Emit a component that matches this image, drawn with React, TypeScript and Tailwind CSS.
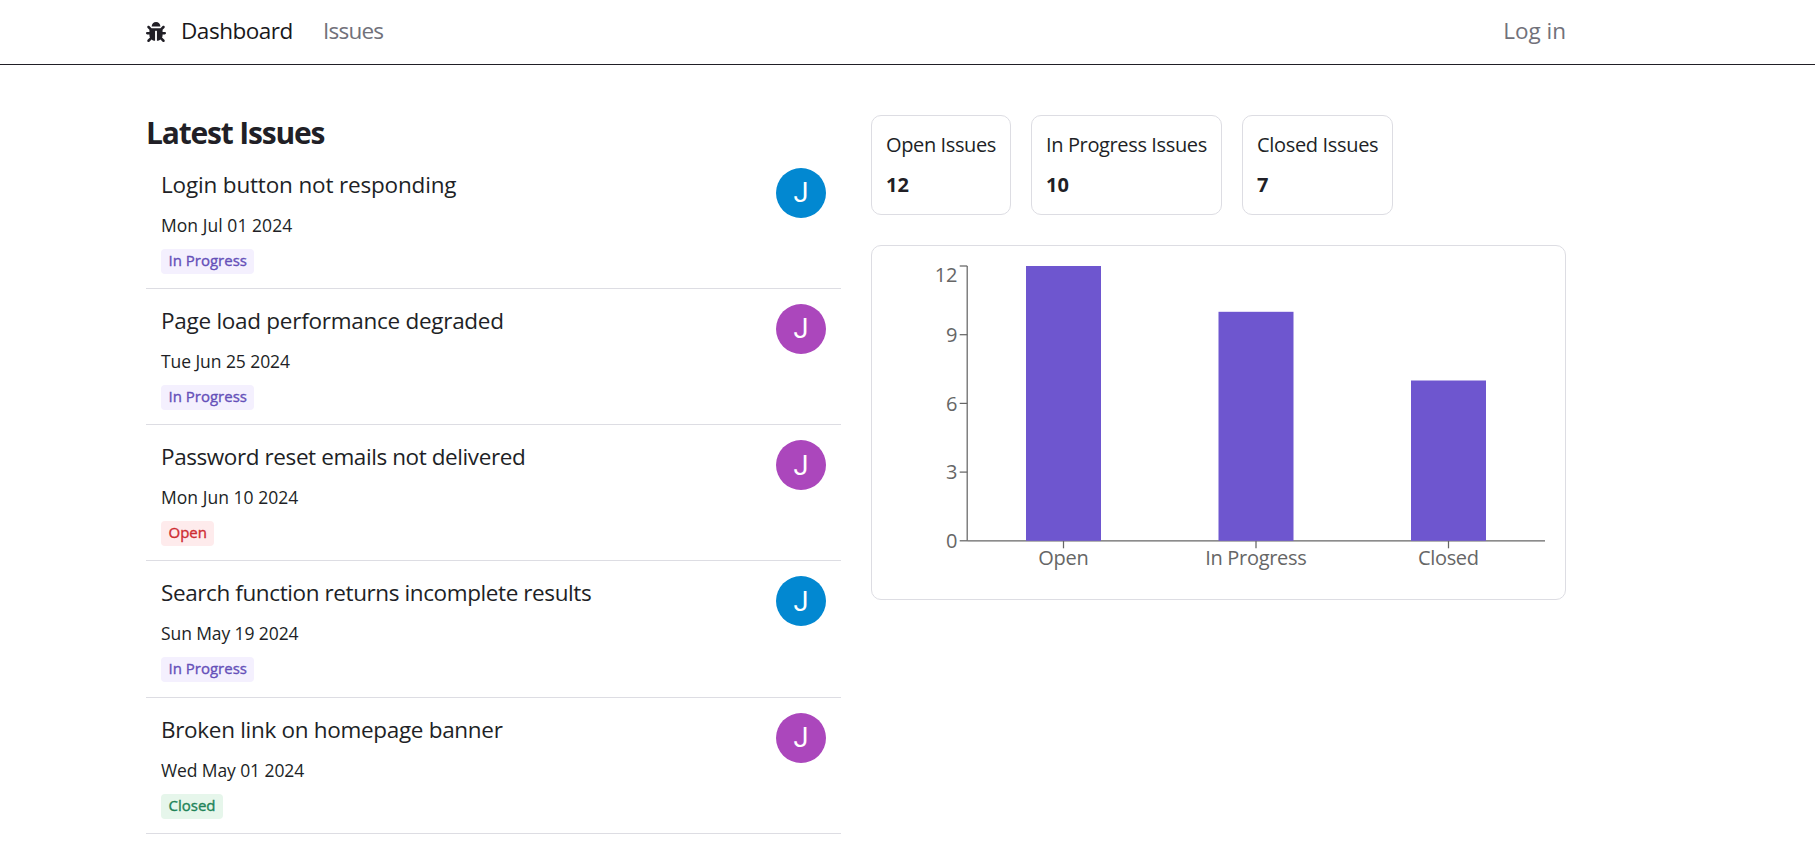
import { FaBug } from "react-icons/fa";

type Status = "In Progress" | "Open" | "Closed";

interface Issue {
  title: string;
  titleClass: string;
  date: string;
  dateClass: string;
  status: Status;
  avatarClass: string;
}

const BLUE = "bg-[#0288d1]";
const PURPLE = "bg-[#ab47bc]";

const issues: Issue[] = [
  {
    title: "Login button not responding",
    titleClass: "tracking-[-0.17px]",
    date: "Mon Jul 01 2024",
    dateClass: "tracking-[0.05px]",
    status: "In Progress",
    avatarClass: BLUE,
  },
  {
    title: "Page load performance degraded",
    titleClass: "tracking-[-0.27px]",
    date: "Tue Jun 25 2024",
    dateClass: "tracking-[-0.07px]",
    status: "In Progress",
    avatarClass: PURPLE,
  },
  {
    title: "Password reset emails not delivered",
    titleClass: "tracking-[-0.41px]",
    date: "Mon Jun 10 2024",
    dateClass: "tracking-[0.03px]",
    status: "Open",
    avatarClass: PURPLE,
  },
  {
    title: "Search function returns incomplete results",
    titleClass: "tracking-[-0.4px]",
    date: "Sun May 19 2024",
    dateClass: "tracking-[-0.1px]",
    status: "In Progress",
    avatarClass: BLUE,
  },
  {
    title: "Broken link on homepage banner",
    titleClass: "tracking-[-0.31px]",
    date: "Wed May 01 2024",
    dateClass: "tracking-[-0.1px]",
    status: "Closed",
    avatarClass: PURPLE,
  },
];

const badgeClasses: Record<Status, string> = {
  "In Progress": "bg-[#f4f0fe] text-[#6550b9]",
  Open: "bg-[#feebec] text-[#ce2c31]",
  Closed: "bg-[#e6f6eb] text-[#218358]",
};

function Badge({ status }: { status: Status }) {
  return (
    <span
      className={`mt-[11px] flex h-[25px] items-center self-start rounded-[4px] px-[7.5px] pb-[2px] text-[15px] leading-none font-medium [-webkit-text-stroke:0.35px_currentColor] ${badgeClasses[status]}`}
    >
      {status}
    </span>
  );
}

function IssueRow({ issue }: { issue: Issue }) {
  return (
    <li className="flex h-[136.25px] items-start justify-between border-b border-[#dddde3] px-[15px] pt-[15px]">
      <div className="flex flex-col pt-[2px]">
        <a className={`text-[22.5px] leading-[30px] ${issue.titleClass}`}>{issue.title}</a>
        <span className={`mt-[13px] text-[17.5px] leading-[25px] ${issue.dateClass}`}>{issue.date}</span>
        <Badge status={issue.status} />
      </div>
      <span
        className={`flex size-[50px] items-center justify-center rounded-full pt-[2px] font-['Roboto',sans-serif] text-[27px] leading-none text-white ${issue.avatarClass}`}
      >
        J
      </span>
    </li>
  );
}

const summary = [
  { label: "Open Issues", value: 12, className: "w-[140px]", labelClass: "tracking-[-0.38px]" },
  { label: "In Progress Issues", value: 10, className: "w-[191px]", labelClass: "tracking-[-0.37px]" },
  { label: "Closed Issues", value: 7, className: "w-[151px]", labelClass: "tracking-[-0.33px]" },
];

const BASE = 295.8;
const UNIT = 22.9;

const bars = [
  { label: "Open", value: 12, x: 155, length: 50.5 },
  { label: "In Progress", value: 10, x: 347.5, length: 101.5 },
  { label: "Closed", value: 7, x: 540, length: 61 },
];

function IssueChart() {
  return (
    <div className="h-[355px] rounded-[10px] border border-[#dddde3]">
      <svg className="-mt-px -ml-px block h-[355px] w-[695px]" viewBox="0 0 695 355" fontSize="20" fill="#666666">
        <g stroke="#666666" strokeWidth="1.25">
          <path d={`M96.2 ${BASE}H674`} />
          <path d={`M96.2 ${BASE}V21.1`} />
          {bars.map((b) => (
            <path key={b.label} d={`M${b.x + 37.5} ${BASE}v7.5`} />
          ))}
          {[0, 3, 6, 9, 12].map((v) => (
            <path key={v} d={`M96.2 ${BASE - v * UNIT}h-7.5`} />
          ))}
        </g>
        {[0, 3, 6, 9, 12].map((v) => (
          <text key={v} x="86.5" y={v === 12 ? 36.5 : BASE - v * UNIT + 7.2} textAnchor="end">
            {v}
          </text>
        ))}
        {bars.map((b) => (
          <g key={b.label}>
            <rect x={b.x} y={BASE - b.value * UNIT} width="75" height={b.value * UNIT} fill="#6e56cf" />
            <text x={b.x + 37.5} y="319.5" textAnchor="middle" textLength={b.length}>
              {b.label}
            </text>
          </g>
        ))}
      </svg>
    </div>
  );
}

export default function App() {
  return (
    <div className="h-[865px] overflow-hidden bg-white font-['Open_Sans',sans-serif] text-[#211f26]">
      <nav className="h-[65px] border-b border-[#211f26]">
        <div className="ml-[146px] flex h-full w-[1420px] items-center text-[22.5px] leading-[30px]">
          <FaBug size={20} />
          <ul className="ml-[15px] flex pb-[3px]">
            <li className="w-[142px] tracking-[-0.47px] text-[#18181b]">Dashboard</li>
            <li className="tracking-[-0.78px] text-[#71717a]">Issues</li>
          </ul>
          <a className="ml-auto pb-[3px] text-[#71717a]">Log in</a>
        </div>
      </nav>
      <main className="ml-[146px] grid w-[1420px] grid-cols-2 gap-[30px] pt-[50px]">
        <section className="-mt-px">
          <h1 className="flex h-[38.5px] items-center text-[30px] leading-none font-bold tracking-[-1.18px]">
            Latest Issues
          </h1>
          <ul>
            {issues.map((issue) => (
              <IssueRow key={issue.title} issue={issue} />
            ))}
          </ul>
        </section>
        <section className="flex flex-col gap-[30px]">
          <div className="flex gap-5">
            {summary.map((s) => (
              <div
                key={s.label}
                className={`flex h-[100px] flex-col gap-[10px] rounded-[10px] border border-[#dddde3] px-[14px] pt-[14px] text-[20px] leading-[30px] ${s.className}`}
              >
                <span className={`whitespace-nowrap ${s.labelClass}`}>{s.label}</span>
                <span className="font-bold">{s.value}</span>
              </div>
            ))}
          </div>
          <IssueChart />
        </section>
      </main>
    </div>
  );
}
